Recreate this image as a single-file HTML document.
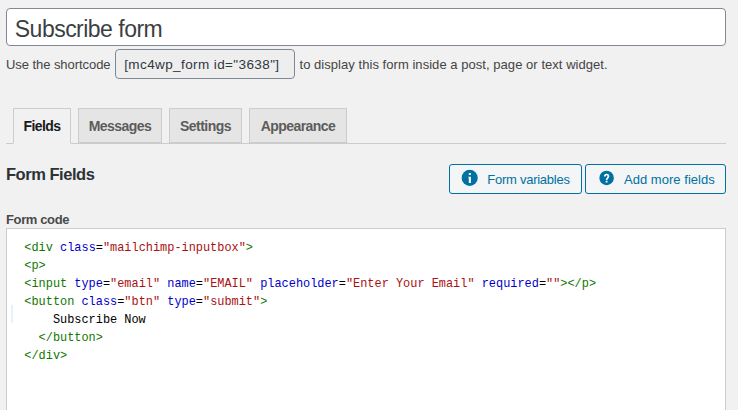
<!DOCTYPE html>
<html><head><meta charset="utf-8">
<style>
html,body{margin:0;padding:0;}
body{width:738px;height:410px;overflow:hidden;background:#f1f1f1;font-family:"Liberation Sans",sans-serif;color:#444;position:relative;}
.abs{position:absolute;white-space:nowrap;}
#title{left:6px;top:8px;width:718px;height:36px;border:1px solid #7e8993;border-radius:4px;background:#fff;}
#titletxt{left:14.8px;top:16px;font-size:23px;line-height:26px;color:#3a3f44;letter-spacing:-0.52px;}
#use{left:6px;top:57px;font-size:13px;line-height:16px;letter-spacing:-0.06px;}
#sc{left:115px;top:49px;width:178px;height:28px;border:1px solid #7e8993;border-radius:4px;background:#eee;}
#sctxt{left:124.2px;top:56.6px;font-size:13.5px;line-height:16px;color:#32373c;letter-spacing:0.4px;}
#disp{left:299.5px;top:57px;font-size:13px;line-height:16px;letter-spacing:0.045px;}
.tab{top:108px;height:35px;border:1px solid #ccc;background:#e5e5e5;font-size:14px;font-weight:bold;line-height:35px;color:#5c5c5c;text-align:center;box-sizing:border-box;letter-spacing:-0.55px;}
#tabline{left:6px;top:143px;width:720px;height:1px;background:#ccc;}
#t1{left:13px;width:58px;background:#f1f1f1;border-bottom:1px solid #f1f1f1;height:36px;color:#1a1a1a;}
#t2{left:78px;width:84px;}
#t3{left:169px;width:73px;}
#t4{left:249px;width:98px;}
#ff{left:6px;top:163.7px;font-size:16.5px;font-weight:bold;line-height:20px;color:#2d3237;letter-spacing:-0.47px;}
.btn{top:164px;height:30px;box-sizing:border-box;border:1px solid #0071a1;border-radius:3px;background:#f3f5f6;color:#0071a1;font-size:13px;line-height:28px;}
#b1{left:449px;width:133px;}
#b2{left:585px;width:141px;}
.btn span{top:1px}
#fc{left:6px;top:212px;font-size:13px;font-weight:bold;line-height:16px;letter-spacing:-0.37px;color:#4a4a4a;}
#code{left:6px;top:228px;width:718px;height:200px;border:1px solid #ccc;background:#fff;}
#gut{left:11px;top:305px;width:2px;height:18px;background:#e8f2ff;}
pre{margin:0;position:absolute;left:24.3px;top:238.5px;font-family:"Liberation Mono",monospace;font-size:11.91px;line-height:18px;color:#000;}
.t{color:#170}.a{color:#00c}.s{color:#a11}
</style></head><body>
<div class="abs" id="title"></div>
<div class="abs" id="titletxt">Subscribe form</div>
<div class="abs" id="use">Use the shortcode</div>
<div class="abs" id="sc"></div>
<div class="abs" id="sctxt">[mc4wp_form id="3638"]</div>
<div class="abs" id="disp">to display this form inside a post, page or text widget.</div>
<div class="abs" id="tabline"></div>
<div class="abs tab" id="t1">Fields</div>
<div class="abs tab" id="t2">Messages</div>
<div class="abs tab" id="t3">Settings</div>
<div class="abs tab" id="t4">Appearance</div>
<div class="abs" id="ff">Form Fields</div>
<div class="abs btn" id="b1">
<svg class="abs" style="left:11px;top:4px" width="18" height="18" viewBox="0 0 18 18"><circle cx="8.7" cy="8.9" r="8.05" fill="#0071a1"/><rect x="7.8" y="4.1" width="2.1" height="1.8" fill="#fff"/><path d="M7.2 7.7h2.7v6.2H7.8V8.6H7.2z" fill="#fff"/></svg>
<span class="abs" style="left:37.3px;letter-spacing:-0.26px">Form variables</span></div>
<div class="abs btn" id="b2">
<svg class="abs" style="left:12px;top:4px" width="18" height="18" viewBox="0 0 18 18"><circle cx="8.6" cy="8.9" r="7.25" fill="#0071a1"/><path d="M6.8 7.5C6.8 4.9 10.4 4.9 10.4 7.3C10.4 9 8.6 9 8.6 11.2" fill="none" stroke="#fff" stroke-width="1.7"/><rect x="7.7" y="12" width="1.8" height="1.5" fill="#fff"/></svg>
<span class="abs" style="left:38px;letter-spacing:0.03px">Add more fields</span></div>
<div class="abs" id="fc">Form code</div>
<div class="abs" id="code"></div>
<div class="abs" id="gut"></div>
<pre><span class="t">&lt;div</span> <span class="a">class</span>=<span class="s">"mailchimp-inputbox"</span><span class="t">&gt;</span>
<span class="t">&lt;p&gt;</span>
<span class="t">&lt;input</span> <span class="a">type</span>=<span class="s">"email"</span> <span class="a">name</span>=<span class="s">"EMAIL"</span> <span class="a">placeholder</span>=<span class="s">"Enter Your Email"</span> <span class="a">required</span>=<span class="s">""</span><span class="t">&gt;&lt;/p&gt;</span>
<span class="t">&lt;button</span> <span class="a">class</span>=<span class="s">"btn"</span> <span class="a">type</span>=<span class="s">"submit"</span><span class="t">&gt;</span>
    Subscribe Now
  <span class="t">&lt;/button&gt;</span>
<span class="t">&lt;/div&gt;</span></pre>
</body></html>
